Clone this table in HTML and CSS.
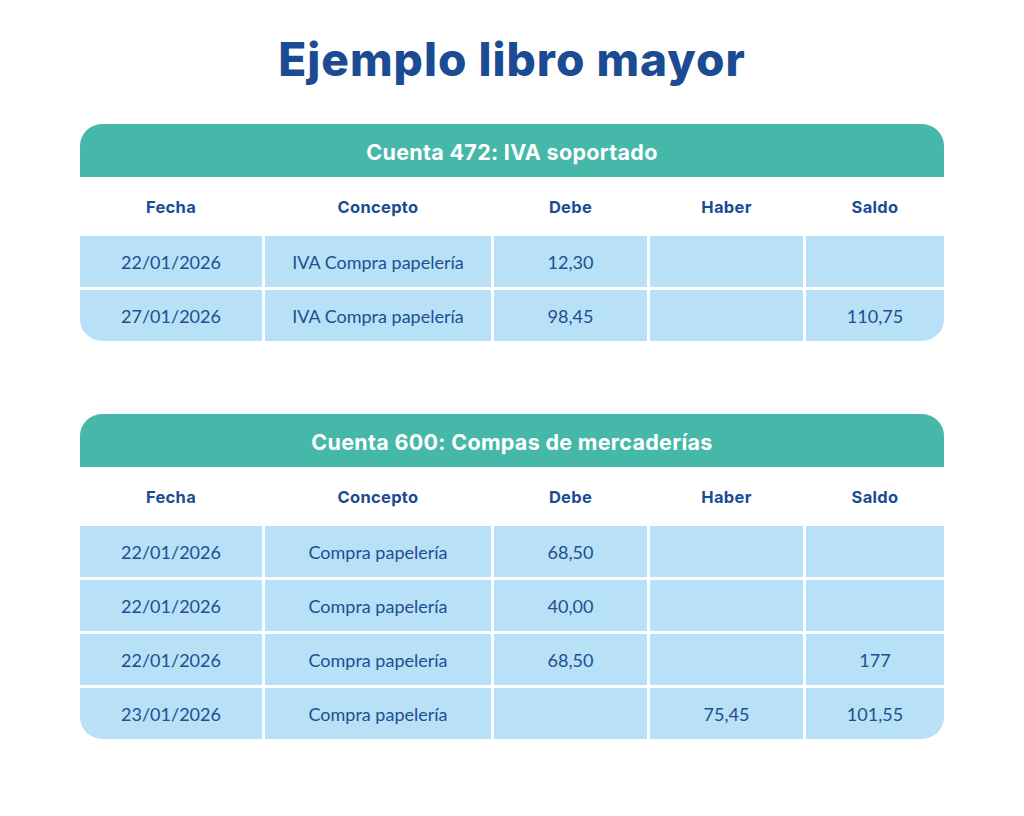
FILE: index.html
```html
<!DOCTYPE html>
<html lang="es">
<head>
<meta charset="utf-8">
<title>Ejemplo libro mayor</title>
<link rel="stylesheet" href="styles.css">
</head>
<body>
<main class="page">
  <h1 class="title">Ejemplo libro mayor</h1>

  <section class="ledger">
    <div class="ledger-head">Cuenta 472: IVA soportado</div>
    <div class="grid">
      <div class="th">Fecha</div>
      <div class="th">Concepto</div>
      <div class="th">Debe</div>
      <div class="th">Haber</div>
      <div class="th">Saldo</div>

      <div class="td">22/01/2026</div>
      <div class="td">IVA Compra papelería</div>
      <div class="td">12,30</div>
      <div class="td"></div>
      <div class="td"></div>

      <div class="td bl">27/01/2026</div>
      <div class="td">IVA Compra papelería</div>
      <div class="td">98,45</div>
      <div class="td"></div>
      <div class="td br">110,75</div>
    </div>
  </section>

  <section class="ledger second">
    <div class="ledger-head">Cuenta 600: Compas de mercaderías</div>
    <div class="grid">
      <div class="th">Fecha</div>
      <div class="th">Concepto</div>
      <div class="th">Debe</div>
      <div class="th">Haber</div>
      <div class="th">Saldo</div>

      <div class="td">22/01/2026</div>
      <div class="td">Compra papelería</div>
      <div class="td">68,50</div>
      <div class="td"></div>
      <div class="td"></div>

      <div class="td">22/01/2026</div>
      <div class="td">Compra papelería</div>
      <div class="td">40,00</div>
      <div class="td"></div>
      <div class="td"></div>

      <div class="td">22/01/2026</div>
      <div class="td">Compra papelería</div>
      <div class="td">68,50</div>
      <div class="td"></div>
      <div class="td">177</div>

      <div class="td bl">23/01/2026</div>
      <div class="td">Compra papelería</div>
      <div class="td"></div>
      <div class="td">75,45</div>
      <div class="td br">101,55</div>
    </div>
  </section>
</main>
</body>
</html>
```

FILE: styles.css
```css
html, body {
  margin: 0;
  padding: 0;
  background: #ffffff;
}

body {
  font-family: "Lato", "Liberation Sans", sans-serif;
  color: #1e4f90;
}

.page {
  width: 864px;
  margin: 0 auto;
  display: flex;
  flex-direction: column;
}

.title {
  margin: 0;
  height: 124px;
  display: flex;
  align-items: center;
  justify-content: center;
  padding-bottom: 6px;
  box-sizing: border-box;
  font-family: "Inter", "Lato", sans-serif;
  font-size: 46px;
  font-weight: 800;
  color: #1b4c93;
  letter-spacing: 1px;
}

.ledger.second {
  margin-top: 73px;
}

.ledger-head {
  height: 53px;
  padding-top: 2px;
  box-sizing: border-box;
  background: #45b8a9;
  border-radius: 22px 22px 0 0;
  color: #ffffff;
  font-family: "Inter", "Lato", sans-serif;
  font-size: 21.5px;
  font-weight: 700;
  letter-spacing: 0.3px;
  display: flex;
  align-items: center;
  justify-content: center;
}

.grid {
  display: grid;
  grid-template-columns: 182px 226px 153px 153px 138px;
  column-gap: 3px;
  row-gap: 3px;
}

.th {
  height: 56px;
  padding-top: 3px;
  box-sizing: border-box;
  display: flex;
  align-items: center;
  justify-content: center;
  font-family: "Inter", "Lato", sans-serif;
  font-size: 16.5px;
  font-weight: 700;
  letter-spacing: 0.3px;
  color: #1b4c93;
}

.td {
  height: 51px;
  background: #b8e0f7;
  display: flex;
  align-items: center;
  justify-content: center;
  font-size: 18px;
  font-weight: 400;
  color: #1e4f90;
}

.bl {
  border-bottom-left-radius: 22px;
}

.br {
  border-bottom-right-radius: 22px;
}
```
